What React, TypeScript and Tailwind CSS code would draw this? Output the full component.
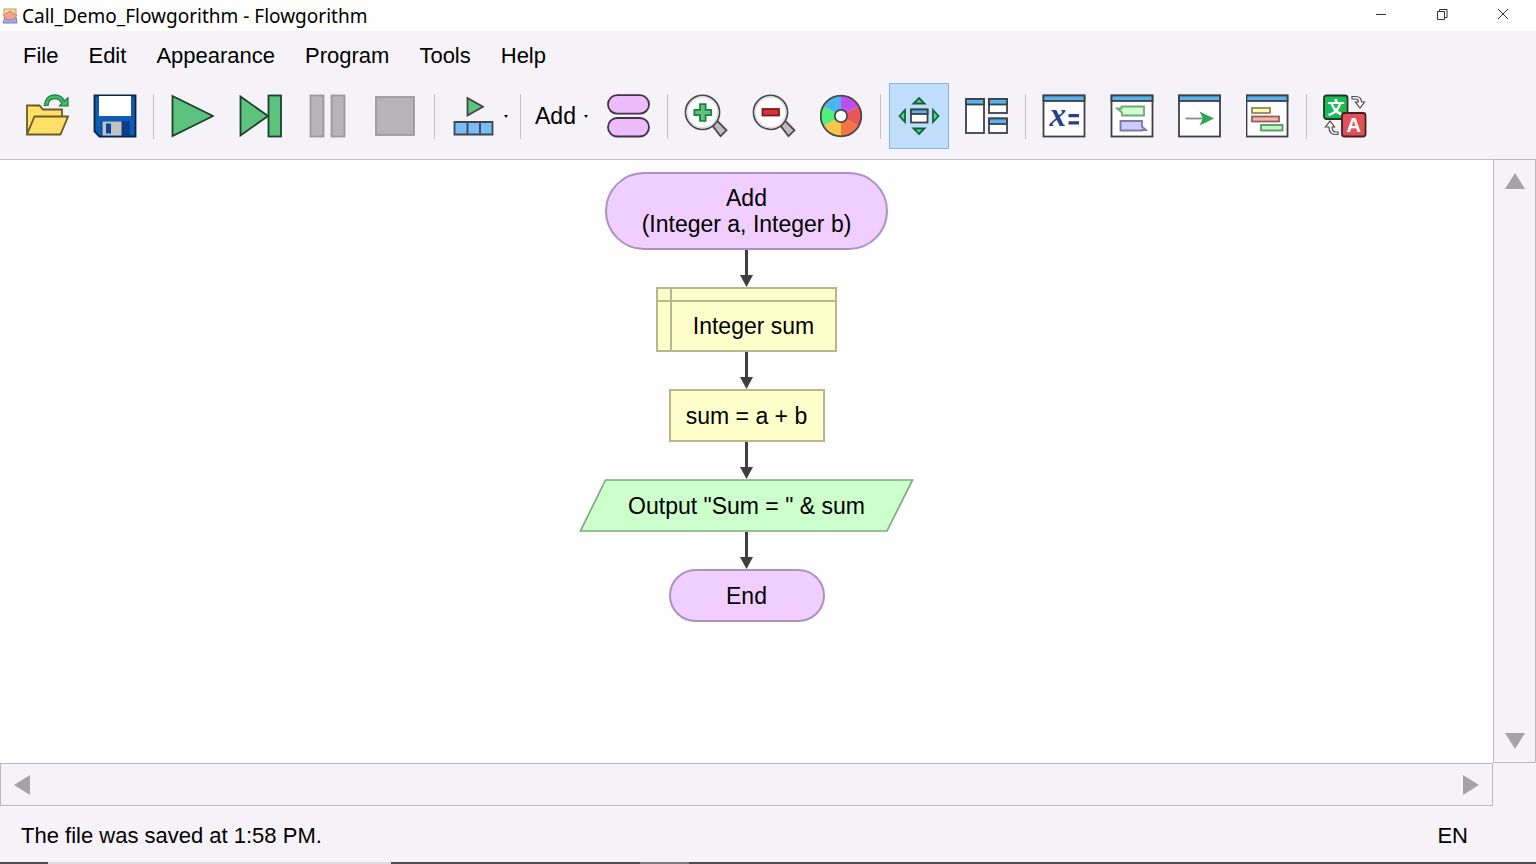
import type { ReactNode } from "react";

const menus = ["File", "Edit", "Appearance", "Program", "Tools", "Help"];

export default function App() {
  return (
    <div className="flex min-h-screen flex-col bg-[#f5f3f7] font-['Liberation_Sans',Arial,sans-serif] text-[22px] text-black">
      <TitleBar />
      <nav className="flex h-[49px] items-center pl-2">
        {menus.map((menu) => (
          <button key={menu} type="button" className="px-[15px] leading-[26px]">
            {menu}
          </button>
        ))}
      </nav>
      <Toolbar />
      <div className="flex flex-1">
        <main className="flex flex-1 flex-col bg-[#fefefe]">
          <Flowchart />
        </main>
        <div className="-mt-px flex w-[43px] flex-col items-center justify-between border border-[#bab8bb] py-[13px]">
          <ScrollButton label="Scroll up" points="10,0 20,16 0,16" />
          <ScrollButton label="Scroll down" points="0,0 20,0 10,16" />
        </div>
      </div>
      <div className="mr-[43px] flex h-[43px] items-center justify-between border border-[#bab8bb] px-[13px]">
        <ScrollButton label="Scroll left" points="0,10 16,0 16,20" sideways />
        <ScrollButton label="Scroll right" points="0,0 16,10 0,20" sideways />
      </div>
      <footer className="flex h-[56px] items-center justify-between pt-0.5 pr-[68px] pl-[21px]">
        <p>The file was saved at 1:58 PM.</p>
        <p>EN</p>
      </footer>
      <div className="flex h-[2px] bg-[#4c4b4e]">
        <div className="ml-[48px] w-[343px] bg-[#dddcde]" />
        <div className="ml-[249px] w-[49px] bg-[#7c7b7e]" />
      </div>
    </div>
  );
}

function TitleBar() {
  return (
    <header className="flex h-[31px] items-center bg-[#fefefe] pr-[3px] pl-[2px]">
      <svg className="size-[16px]" viewBox="0 0 16 16">
        <rect x="2" y="1" width="12" height="6" fill="#f4e08e" stroke="#b59d6a" />
        <path d="M1 15 3 9h11l1 6z" fill="#a9a6e6" stroke="#7d7ab8" />
        <path d="m8 3 7 4.5-4 4H5l-4-4z" fill="#f5a191" stroke="#c77f7b" />
      </svg>
      <h1 className="ml-[4px] flex-1 font-['Noto_Sans','Open_Sans',sans-serif] text-[19px] leading-[28px]">
        Call_Demo_Flowgorithm - Flowgorithm
      </h1>
      <div className="flex self-start">
        <WindowButton label="Minimize">
          <path d="M1 6.5h10" />
        </WindowButton>
        <WindowButton label="Restore">
          <path d="M1.5 3.5h7v8h-7zM3.5 3.5v-2H11v8H8.5" />
        </WindowButton>
        <WindowButton label="Close">
          <path d="m1 1 10 10M11 1 1 11" />
        </WindowButton>
      </div>
    </header>
  );
}

function WindowButton({ label, children }: { label: string; children: ReactNode }) {
  return (
    <button type="button" aria-label={label} className="flex h-[28px] w-[61px] items-center justify-center">
      <svg className="size-[12px]" viewBox="0 0 12 12" fill="none" stroke="#333">
        {children}
      </svg>
    </button>
  );
}

function ScrollButton({ label, points, sideways }: { label: string; points: string; sideways?: boolean }) {
  return (
    <button type="button" aria-label={label}>
      <svg
        className={sideways ? "h-[20px] w-[16px]" : "h-[16px] w-[20px]"}
        viewBox={sideways ? "0 0 16 20" : "0 0 20 16"}
      >
        <polygon points={points} fill="#a5a3a6" />
      </svg>
    </button>
  );
}

/* ---------- toolbar ---------- */

function Toolbar() {
  return (
    <div className="flex h-[80px] border-b border-[#c4c2c5] pt-[3px] pl-[17px]">
      <Group>
        <Tool label="Open">
          <path d="M2 40.500V11.500h12.500l3.500 4h19v7" fill="#ffe066" stroke="#6b5a2a" />
          <path d="M2 40.500 9.500 22.500H43l-7.500 18z" fill="#ffe066" stroke="#6b5a2a" />
          <path
            d="M19.500 11.500C20 4 24.500.8 29.500.8c5.500 0 8.500 2.700 9.800 6.200L43 3.800v8h-8.500l2.300-2.500c-1.300-2.800-3.800-4.600-7.300-4.600-3.800 0-6 2.300-6.500 6.800z"
            fill="#3fbf62"
            stroke="#1f7a3d"
            strokeWidth="1.2"
          />
        </Tool>
        <Tool label="Save">
          <path d="M1.500 1.500h41v41h-36l-5-5z" fill="#0d5cb8" stroke="#0a2244" />
          <rect x="6" y="2" width="32" height="20" fill="#fff" />
          <rect x="8.500" y="27" width="28.500" height="14.500" fill="#0b3f8a" />
          <rect x="9.500" y="27.500" width="19" height="14" fill="#c3c3c6" />
          <rect x="13" y="29.500" width="5" height="10" fill="#0b4796" />
        </Tool>
      </Group>
      <Separator />
      <Group>
        <Tool label="Run">
          <path d="M2.500 2 43 22 2.500 42z" fill="#5cc27d" stroke="#1d3f2b" />
        </Tool>
        <Tool label="Step">
          <path d="M2.500 2.500 30 22 2.500 41.500z" fill="#5cc27d" stroke="#1d3f2b" />
          <rect x="30.500" y="1.500" width="12.500" height="41" fill="#5cc27d" stroke="#1d3f2b" />
        </Tool>
        <Tool label="Pause">
          <g fill="#b6b4b7" stroke="#9b999c">
            <rect x="4.500" y="1.500" width="13" height="41" />
            <rect x="25.500" y="1.500" width="13" height="41" />
          </g>
        </Tool>
        <Tool label="Stop">
          <rect x="2" y="3" width="38" height="38" fill="#b6b4b7" stroke="#9b999c" />
        </Tool>
      </Group>
      <Separator />
      <button type="button" aria-label="Run speed" className="flex h-[66px] w-[69px] items-center gap-[9px] pl-[8px]">
        <svg className="size-[44px]" viewBox="0 0 44 44" strokeWidth="1.8">
          <path d="M16.500 4v17.500L32 12.700z" fill="#5cc27d" stroke="#414642" />
          <path d="M3.500 28h38v12.500h-38zM16.500 28v12.500M29 28v12.500" fill="#77bdf9" stroke="#3d454d" />
        </svg>
        <DropArrow />
      </button>
      <Separator />
      <Group>
        <label className="flex h-[66px] w-[62px] items-center pl-[6px]">
          <select aria-label="Function" className="w-[49px] appearance-none bg-transparent text-[23px]">
            <option>Add</option>
          </select>
          <DropArrow />
        </label>
        <Tool label="Manage functions">
          <g fill="#edbcfb" stroke="#43304a">
            <rect x="1" y="1.200" width="41" height="18.500" rx="9.200" />
            <rect x="1" y="24" width="41" height="18.500" rx="9.200" />
          </g>
        </Tool>
      </Group>
      <Separator />
      <Group>
        <Tool label="Zoom in">
          <Lens />
          <path d="M16 10.200h5.600v5.600h5.600v5.400h-5.600v5.600H16v-5.600h-5.600v-5.400H16z" fill="#5fc47c" stroke="#1f8046" />
        </Tool>
        <Tool label="Zoom out">
          <Lens />
          <rect x="10.500" y="15" width="16.500" height="6.500" fill="#c9373b" stroke="#8d1418" />
        </Tool>
        <Tool label="Color scheme">
          <g stroke="none">
            <path d="M21 22V1.300a20.700 20.700 0 0 1 17.900 10.350z" fill="#bd4ff2" />
            <path d="M21 22 38.900 11.650a20.700 20.700 0 0 1 0 20.700z" fill="#ea5559" />
            <path d="M21 22 38.900 32.350A20.700 20.700 0 0 1 21 42.700z" fill="#f27543" />
            <path d="M21 22v20.700A20.700 20.700 0 0 1 3.100 32.350z" fill="#f5c84a" />
            <path d="M21 22 3.100 32.350a20.700 20.700 0 0 1 0-20.700z" fill="#50ee7a" />
            <path d="M21 22 3.100 11.650A20.700 20.700 0 0 1 21 1.300z" fill="#4cb4ee" />
          </g>
          <circle cx="21" cy="22" r="20.300" stroke="#4a474c" />
          <circle cx="21" cy="22" r="6.200" fill="#fff" stroke="#4a474c" />
        </Tool>
      </Group>
      <Separator />
      <Group>
        <Tool label="Auto-arrange windows" active>
          <g fill="#56d68a" stroke="#14623a">
            <path d="m22 4 5.500 5.500h-11zM22 40l5.500-5.500h-11zM2.500 22l5.500-6v12zM41.500 22l-5.500-6v12z" />
          </g>
          <MiniWindow x={14} y={15.5} w={16.5} h={13} head={4.5} />
        </Tool>
        <Tool label="Layout windows">
          <MiniWindow x={1} y={5} w={18} h={34} head={5.5} />
          <MiniWindow x={24} y={5} w={18} h={14} head={5.5} />
          <MiniWindow x={24} y={24.5} w={18} h={14.5} head={5.5} />
        </Tool>
      </Group>
      <Separator />
      <Group>
        <Tool label="Variable watch">
          <MiniWindow x={1.5} y={1.5} w={41} h={41} head={5.5} />
          <g stroke="none" fill="#26408b">
            <text x="7.500" y="32" className="font-['Liberation_Serif',serif] text-[33px] font-bold italic">
              x
            </text>
            <path d="M26.500 20H37v3.300H26.500zM26.500 27.300H37v3.300H26.500z" />
          </g>
        </Tool>
        <Tool label="Console">
          <MiniWindow x={1.5} y={1.5} w={41} h={41} head={5.5} />
          <path d="M7 14.500h4.500v-2h22.500v9H12v-3z" fill="#ccffcc" stroke="#76a37a" />
          <path d="M10.500 27H32v5.500l4 3.500h-4v.5H10.500z" fill="#ccccff" stroke="#7b7ba6" />
        </Tool>
        <Tool label="Turtle graphics">
          <MiniWindow x={1} y={1.5} w={41} h={41} head={5.5} />
          <path d="M7.500 24.500h18" stroke="#8c8a8d" />
          <path d="m21.500 17.500 14.500 7-14.500 7 3.500-7z" fill="#27a653" />
        </Tool>
        <Tool label="Source code">
          <MiniWindow x={0.5} y={1.5} w={41} h={41} head={5.5} />
          <rect x="6" y="14" width="18" height="5" fill="#fdf9b8" stroke="#8d8a58" />
          <rect x="6" y="22.500" width="27" height="5" fill="#f9b4b4" stroke="#945c5c" />
          <rect x="15" y="31" width="21.500" height="5.500" fill="#b8f7c0" stroke="#5a9464" />
        </Tool>
      </Group>
      <Separator />
      <Tool label="Language">
        <rect x="1" y="1.500" width="23.500" height="23.500" rx="2.500" fill="#1eb957" stroke="#1d3a28" />
        <text
          x="12.700"
          y="19.500"
          textAnchor="middle"
          className="font-['Noto_Sans_CJK_SC',sans-serif] text-[17px] font-bold"
          fill="#fff"
          stroke="none"
        >
          文
        </text>
        <rect x="19" y="19" width="23.500" height="23.500" rx="2.500" fill="#e0525a" stroke="#4a1d22" />
        <text x="30.800" y="38" textAnchor="middle" className="text-[20px] font-bold" fill="#fff" stroke="none">
          A
        </text>
        <g fill="#fff" stroke="#4a484b" strokeWidth="1.2">
          <path d="M29 2.500h3.500c4 0 6 2 6 5.500h3L37 14l-4.500-6h3c0-2-1-3-3-3H29z" />
          <path d="M15 40.500h-2.500C8 40.500 6 38 6 33H2.500L7 27l4.500 6H9c0 3 1 5 3.500 5H15z" />
        </g>
      </Tool>
    </div>
  );
}

function Group({ children }: { children: ReactNode }) {
  return <div className="flex gap-2">{children}</div>;
}

function Separator() {
  return <div className="mx-2 mt-[11px] h-[45px] w-px bg-[#c2c0c3]" />;
}

function Tool({ label, active, children }: { label: string; active?: boolean; children: ReactNode }) {
  return (
    <button
      type="button"
      aria-label={label}
      className={
        active
          ? "flex h-[66px] w-[60px] items-center justify-center bg-[#bfdefc] outline -outline-offset-1 outline-[#7fb4ea]"
          : "flex h-[66px] w-[60px] items-center justify-center"
      }
    >
      <svg className="size-[44px]" viewBox="0 0 44 44" fill="none" strokeWidth="1.8">
        {children}
      </svg>
    </button>
  );
}

function DropArrow() {
  return (
    <svg className="h-[3px] w-[4px] shrink-0" viewBox="0 0 4 3">
      <path d="M0 0h4L2 3z" fill="#111" />
    </svg>
  );
}

function Lens() {
  return (
    <>
      <path d="m28 31 5-4.500 9.500 9.800-6 5.900z" fill="#bdbbbf" stroke="#4a484b" />
      <circle cx="18.500" cy="18.300" r="17" fill="#fdfdfe" stroke="#4a484b" />
      <circle cx="18.500" cy="18.300" r="15.400" stroke="#dedce2" strokeWidth="1.5" />
    </>
  );
}

function MiniWindow({ x, y, w, h, head }: { x: number; y: number; w: number; h: number; head: number }) {
  return (
    <g stroke="#3d4147">
      <rect x={x} y={y} width={w} height={h} fill="#fff" />
      <rect x={x} y={y} width={w} height={head} fill="#57b4ee" />
    </g>
  );
}

/* ---------- flowchart ---------- */

function Flowchart() {
  return (
    <div className="flex flex-col items-center pt-[12px] text-[23px] leading-[26px]">
      <div className="flex h-[78px] w-[283px] flex-col items-center justify-center rounded-full border-2 border-[#ad92bd] bg-[#f0ceff] text-center">
        <p>Add</p>
        <p>(Integer a, Integer b)</p>
      </div>
      <Arrow />
      <div className="grid h-[65px] w-[181px] grid-cols-[14px_1fr] grid-rows-[13px_1fr] border-2 border-[#b8b88c] bg-[#ffffcc]">
        <div className="border-r-2 border-b-2 border-[#b8b88c]" />
        <div className="border-b-2 border-[#b8b88c]" />
        <div className="border-r-2 border-[#b8b88c]" />
        <p className="flex items-center justify-center">Integer sum</p>
      </div>
      <Arrow />
      <div className="flex h-[53px] w-[156px] items-center justify-center border-2 border-[#b8b88c] bg-[#ffffcc]">
        sum = a + b
      </div>
      <Arrow />
      <div className="relative flex h-[53px] w-[335px] items-center justify-center">
        <svg className="absolute inset-0 size-full" viewBox="0 0 335 53">
          <path d="M26.500 1h307L308 52H1.500z" fill="#ccffcc" stroke="#7cab80" strokeWidth="1.7" />
        </svg>
        <p className="relative">Output "Sum = " &amp; sum</p>
      </div>
      <Arrow />
      <div className="flex h-[53px] w-[156px] items-center justify-center rounded-full border-2 border-[#ad92bd] bg-[#f0ceff]">
        End
      </div>
    </div>
  );
}

function Arrow() {
  return (
    <svg className="h-[37px] w-[13px]" viewBox="0 0 13 37">
      <path d="M5 0h3v25h5L6.500 37 0 25h5z" fill="#3f3e42" />
    </svg>
  );
}
